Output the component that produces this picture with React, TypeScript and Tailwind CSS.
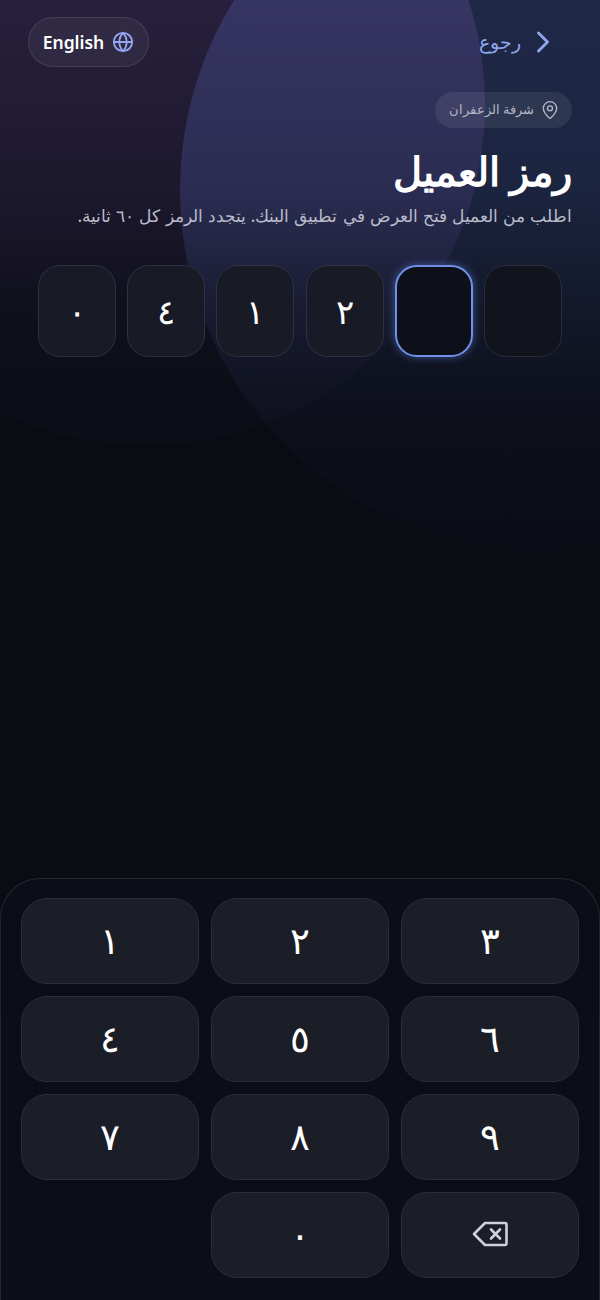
import { ChevronRight, Globe, MapPin } from "lucide-react";

const keys = ["١", "٢", "٣", "٤", "٥", "٦", "٧", "٨", "٩"];
const code = ["٢", "١", "٤", "٠"];

const keyClass =
  "flex h-[86px] items-center justify-center rounded-[26px] border border-[#2b2e39] bg-[#1b1e27] pb-[3px] text-[37px] font-medium";

function BackspaceIcon() {
  return (
    <svg width="38" height="28" viewBox="0 0 38 28" fill="none" stroke="#cfd0da" strokeWidth="2.6" strokeLinejoin="round" strokeLinecap="round">
      <path d="M14 3H34a1.5 1.5 0 0 1 1.500 1.500V23.500A1.500 1.500 0 0 1 34 25H14L3 14Z" />
      <path d="M20 9.500 29 18.500M29 9.500 20 18.500" />
    </svg>
  );
}

export default function App() {
  return (
    <div
      dir="rtl"
      className="relative flex h-[1300px] w-[600px] flex-col overflow-hidden bg-[#0a0c14] font-['Noto_Sans','Inter',sans-serif] text-white"
    >
      {/* background glows */}
      <div className="absolute -top-[170px] left-[180px] h-[720px] w-[720px] rounded-full bg-[linear-gradient(180deg,rgba(70,95,170,0.34)_24%,rgba(70,95,170,0.29)_50%,rgba(70,95,170,0.22)_58%,rgba(70,95,170,0.13)_69%,rgba(70,95,170,0.06)_79%,rgba(70,95,170,0.02)_93%,rgba(70,95,170,0.01)_100%)]" />
      <div className="absolute -left-[195px] -top-[235px] h-[680px] w-[680px] rounded-full bg-[linear-gradient(180deg,rgba(120,85,170,0.27)_35%,rgba(120,85,170,0.16)_64%,rgba(120,85,170,0.06)_79%,rgba(120,85,170,0.02)_93%)]" />

      <div className="relative flex h-[84px] items-center justify-between pl-[28px] pr-[39px]">
        <div className="flex items-center gap-[4px] text-[#8fa5ee]">
          <ChevronRight size={36} strokeWidth={1.9} />
          <span className="text-[18.5px]">رجوع</span>
        </div>
        <div className="flex h-[50px] w-[121px] items-center justify-center gap-[8px] rounded-full border border-white/10 bg-white/5">
          <Globe size={22} strokeWidth={2} className="text-[#93a7f2]" />
          <span className="text-[17.5px] font-semibold">English</span>
        </div>
      </div>

      <div className="relative flex flex-col items-start px-[28px] pt-[8px]">
        <div className="flex h-[36px] items-center gap-[6px] rounded-full bg-white/[0.08] pl-[14px] pr-[12px] text-[13px] text-[#b4b6c4]">
          <MapPin size={20} strokeWidth={1.6} />
          <span>شرفة الزعفران</span>
        </div>
        <h1 className="mb-[3px] mt-[15px] text-[40px] font-semibold leading-[56px]">رمز العميل</h1>
        <p className="text-[17.3px] leading-[28px] text-[#b9bbca] [word-spacing:0.6px]">
          اطلب من العميل فتح العرض في تطبيق البنك. يتجدد الرمز كل ٦٠ ثانية.
        </p>
      </div>

      <div className="relative mt-[35px] flex justify-between px-[38px]">
        <div className="h-[92px] w-[78px] rounded-[22px] border border-[#2a2c39] bg-[#11141d]" />
        <div className="h-[92px] w-[78px] rounded-[22px] border-2 border-[#6f8fe8] bg-[#0e1019] shadow-[0_0_8px_rgba(100,135,235,0.55)]" />
        {code.map((d, i) => (
          <div
            key={i}
            className="flex h-[92px] w-[78px] items-center justify-center rounded-[22px] border border-[#2f3140] bg-[#181a26] text-[34px] font-medium"
          >
            {d}
          </div>
        ))}
      </div>

      <div dir="ltr" className="relative mt-auto rounded-t-[40px] border border-b-0 border-white/10 bg-[#0b0e17] px-[20px] pb-[22px] pt-[19px]">
        <div className="grid grid-cols-3 gap-[12px]">
          {keys.map((k) => (
            <div key={k} className={keyClass}>
              {k}
            </div>
          ))}
          <div />
          <div className={keyClass}>٠</div>
          <div className={keyClass}>
            <BackspaceIcon />
          </div>
        </div>
      </div>
    </div>
  );
}
